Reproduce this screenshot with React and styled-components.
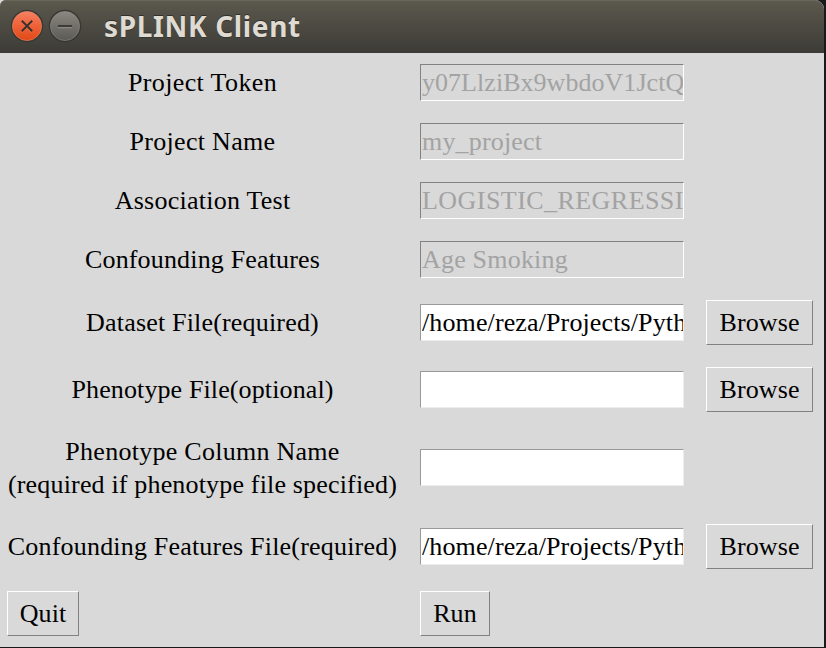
import React from "react";
import styled, { createGlobalStyle } from "styled-components";

const GlobalStyle = createGlobalStyle`
  *, *::before, *::after { box-sizing: border-box; }
  body { margin: 0; background: #17191c; overflow: hidden; }
`;

const Window = styled.main`
  width: 824px;
  height: 647px;
  background: #d9d9d9;
  border-radius: 0 9px 0 0;
  overflow: hidden;
  font: 26px/33px "Liberation Serif", serif;
  color: #000;
`;

const TitleBar = styled.header`
  display: flex;
  align-items: center;
  height: 53px;
  padding: 0 0 1px 10px;
  gap: 4px;
  background: linear-gradient(#5d5b4f, #57554a 14%, #3c3b37);
  box-shadow: inset 0 1px #68665a;
  border-radius: 6px 9px 0 0;
`;

const WindowButton = styled.svg`
  display: block;
  flex: none;
  width: 34px;
  height: 34px;
`;

const Title = styled.h1`
  margin: 0 0 0 18px;
  font: bold 28px/52px "Noto Sans", sans-serif;
  letter-spacing: 0.65px;
  color: #dfdbd2;
  text-shadow: 0 -1px #302f2b, 0 1px #383733;
  white-space: nowrap;
`;

const Form = styled.div`
  display: grid;
  grid-template-rows: repeat(4, 59px) 67px 67px 90px 67px 67px;
`;

const Row = styled.div`
  display: grid;
  grid-template-columns: 404px 280px 140px;
  align-items: center;
`;

const Label = styled.label`
  padding-left: 1px;
  text-align: center;
`;

const LabelLine = styled.span`
  display: block;
  letter-spacing: ${(p) => p.$tracking}px;
`;

const Entry = styled.input`
  width: 264px;
  height: 37px;
  margin: 0 0 ${(p) => p.$lift || 0}px 16px;
  padding: 1px 0 0 1px;
  border: 1px solid;
  border-radius: 0;
  border-color: #999 #ececec #ececec #999;
  outline: none;
  background: #fff;
  font: inherit;
  letter-spacing: ${(p) => p.$tracking || 0}px;
  color: #000;
  &:disabled {
    border-color: #828282 #fff #fff #828282;
    background: #d9d9d9;
    color: #a3a3a3;
  }
`;

const Button = styled.button`
  width: ${(p) => p.$width}px;
  height: 45px;
  margin: 0 0 0 ${(p) => p.$indent}px;
  padding: 0 0 1px;
  border: 1px solid;
  border-color: #fff #828282 #828282 #fff;
  border-radius: 0;
  background: #d9d9d9;
  font: inherit;
  letter-spacing: 0.12px;
  color: #000;
`;

const fields = [
  { lines: [["Project Token", 0.38]], value: "y07LlziBx9wbdoV1JctQ", tracking: 0.04, disabled: true },
  { lines: [["Project Name", 0.3]], value: "my_project", tracking: 0.18, disabled: true },
  { lines: [["Association Test", 0.25]], value: "LOGISTIC_REGRESSION", tracking: 0.45, disabled: true },
  { lines: [["Confounding Features", 0.16]], value: "Age Smoking", tracking: 0.2, disabled: true },
  { lines: [["Dataset File(required)", 0.18]], value: "/home/reza/Projects/Python", tracking: 0.12, browse: true },
  { lines: [["Phenotype File(optional)", 0.12]], value: "", browse: true },
  {
    lines: [["Phenotype Column Name", 0.27], ["(required if phenotype file specified)", 0.17]],
    value: "",
    lift: 1,
  },
  { lines: [["Confounding Features File(required)", 0.19]], value: "/home/reza/Projects/Python", tracking: 0.12, browse: true },
];

function CloseIcon() {
  return (
    <WindowButton viewBox="0 0 34 34" role="img" aria-label="Close">
      <defs>
        <linearGradient id="close" x2="0" y2="1">
          <stop stopColor="#f38163" />
          <stop offset=".5" stopColor="#ef6138" />
          <stop offset="1" stopColor="#df4916" />
        </linearGradient>
      </defs>
      <circle cx="17" cy="17" r="16.2" fill="#383733" />
      <circle cx="17" cy="17" r="14.6" fill="url(#close)" stroke="#f98c68" strokeOpacity=".55" />
      <path d="M12 13l10 10M22 13L12 23" stroke="#f6895f" strokeOpacity=".55" strokeWidth="1.8" />
      <path d="M11.8 11.8l10.4 10.4M22.2 11.8L11.8 22.2" stroke="#3b302b" strokeWidth="2" />
    </WindowButton>
  );
}

function MinimizeIcon() {
  return (
    <WindowButton viewBox="0 0 34 34" role="img" aria-label="Minimize">
      <defs>
        <linearGradient id="minimize" x2="0" y2="1">
          <stop stopColor="#898780" />
          <stop offset="1" stopColor="#5b5a54" />
        </linearGradient>
      </defs>
      <circle cx="17" cy="17" r="16.2" fill="#383733" />
      <circle cx="17" cy="17" r="14.6" fill="url(#minimize)" stroke="#99978e" strokeOpacity=".5" />
      <path d="M10 18.5h14" stroke="#8b8982" strokeWidth="1.5" />
      <path d="M10 17h14" stroke="#3c3b37" strokeWidth="2" />
    </WindowButton>
  );
}

export default function App() {
  return (
    <>
      <GlobalStyle />
      <Window>
        <TitleBar>
          <CloseIcon />
          <MinimizeIcon />
          <Title>sPLINK Client</Title>
        </TitleBar>
        <Form>
          {fields.map((f, i) => (
            <Row key={i}>
              <Label htmlFor={`field-${i}`}>
                {f.lines.map(([text, tracking]) => (
                  <LabelLine key={text} $tracking={tracking}>{text}</LabelLine>
                ))}
              </Label>
              <Entry
                id={`field-${i}`}
                value={f.value}
                disabled={f.disabled}
                readOnly
                $tracking={f.tracking}
                $lift={f.lift}
              />
              {f.browse && <Button $width={107} $indent={22}>Browse</Button>}
            </Row>
          ))}
          <Row>
            <Button $width={72} $indent={7}>Quit</Button>
            <Button $width={70} $indent={16}>Run</Button>
          </Row>
        </Form>
      </Window>
    </>
  );
}
